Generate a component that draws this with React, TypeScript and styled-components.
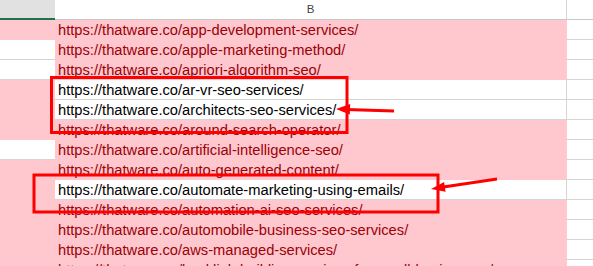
import styled, { createGlobalStyle } from "styled-components";

const GlobalStyle = createGlobalStyle`
  html, body {
    margin: 0;
    padding: 0;
    background: #ffffff;
  }
`;

const pink = "#ffc7ce";
const darkRed = "#9c0006";
const grid = "#d4d4d4";

interface SheetRow {
  path: string;
  aHit: boolean;
  bHit: boolean;
}

const rows: SheetRow[] = [
  { path: "app-development-services/", aHit: true, bHit: true },
  { path: "apple-marketing-method/", aHit: false, bHit: true },
  { path: "apriori-algorithm-seo/", aHit: false, bHit: true },
  { path: "ar-vr-seo-services/", aHit: true, bHit: false },
  { path: "architects-seo-services/", aHit: true, bHit: false },
  { path: "around-search-operator/", aHit: true, bHit: true },
  { path: "artificial-intelligence-seo/", aHit: false, bHit: true },
  { path: "auto-generated-content/", aHit: true, bHit: true },
  { path: "automate-marketing-using-emails/", aHit: true, bHit: false },
  { path: "automation-ai-seo-services/", aHit: true, bHit: true },
  { path: "automobile-business-seo-services/", aHit: true, bHit: true },
  { path: "aws-managed-services/", aHit: true, bHit: true },
  { path: "backlink-building-services-for-small-businesses/", aHit: true, bHit: true },
];

export default function App() {
  return (
    <>
      <GlobalStyle />
      <Sheet>
        <HeaderRow>
          <HeaderCell $selected />
          <HeaderCell $edge>B</HeaderCell>
          <HeaderCell />
        </HeaderRow>
        {rows.map((r) => (
          <Row key={r.path}>
            <Cell $hit={r.aHit} />
            <UrlCell $hit={r.bHit}>https://thatware.co/{r.path}</UrlCell>
            <Cell $hit={false} />
          </Row>
        ))}
        <Annotations width="593" height="266" viewBox="0 0 593 266">
          <rect x="51.5" y="77.5" width="295.5" height="55" fill="none" stroke="#ff0000" strokeWidth="3" />
          <rect x="34" y="175" width="404" height="37" fill="none" stroke="#ff0000" strokeWidth="3" />
          <line x1="394" y1="111" x2="346" y2="109.4" stroke="#ff0000" strokeWidth="3" />
          <polygon points="336,109 350.2,104 349.8,114.5" fill="#ff0000" />
          <line x1="497" y1="179" x2="440" y2="187.6" stroke="#ff0000" strokeWidth="3" />
          <polygon points="431,189 444.1,181.9 445.6,191.8" fill="#ff0000" />
        </Annotations>
      </Sheet>
    </>
  );
}

const Sheet = styled.div`
  position: relative;
  width: 593px;
  height: 266px;
  overflow: hidden;
  font-family: "Liberation Sans", Arial, sans-serif;
`;

const columns = `
  display: grid;
  grid-template-columns: 55px 512px 1fr;
`;

const HeaderRow = styled.div`
  ${columns};
  height: 20px;
`;

const HeaderCell = styled.div<{ $selected?: boolean; $edge?: boolean }>`
  box-sizing: border-box;
  height: 20px;
  display: flex;
  align-items: center;
  justify-content: center;
  padding-bottom: 1px;
  font-size: 11.5px;
  color: #444444;
  background: ${(p) => (p.$selected ? "#e1e1e1" : "#ffffff")};
  border-bottom: ${(p) => (p.$selected ? "2px solid #217346" : "1px solid #c6c6c6")};
  border-right: ${(p) => (p.$edge ? `1px solid ${grid}` : "none")};
`;

const Row = styled.div`
  ${columns};
  height: 20px;
`;

const Cell = styled.div<{ $hit: boolean }>`
  box-sizing: border-box;
  height: 20px;
  background: ${(p) => (p.$hit ? pink : "#ffffff")};
  border-bottom: 1px solid ${(p) => (p.$hit ? pink : grid)};
`;

const UrlCell = styled.div<{ $hit: boolean }>`
  box-sizing: border-box;
  height: 20px;
  padding: 2px 0 0 3px;
  line-height: 17px;
  font-size: 14.7px;
  white-space: nowrap;
  color: ${(p) => (p.$hit ? darkRed : "#000000")};
  background: ${(p) => (p.$hit ? pink : "#ffffff")};
  border-bottom: 1px solid ${(p) => (p.$hit ? pink : grid)};
  border-right: 1px solid ${(p) => (p.$hit ? pink : grid)};
`;

const Annotations = styled.svg`
  position: absolute;
  left: 0;
  top: 0;
  pointer-events: none;
`;
